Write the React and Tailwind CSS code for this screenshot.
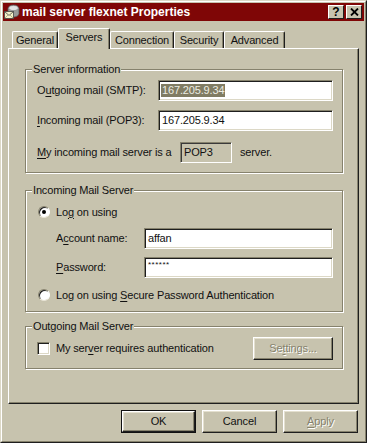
import React from 'react';

const raised =
  'border border-t-white border-l-white border-r-[#1e1e1e] border-b-[#1e1e1e] shadow-[inset_-1px_-1px_0_#86826d,inset_1px_1px_0_#e4e0cf]';
const sunken =
  'border border-t-[#86826d] border-l-[#86826d] border-r-white border-b-white shadow-[inset_1px_1px_0_#1e1e1e,inset_-1px_-1px_0_#dcd8c6]';
const etched = 'border border-[#86826d] shadow-[inset_1px_1px_0_#fff,1px_1px_0_#fff]';
const disabledText = 'text-[#86826d] [text-shadow:1px_1px_0_#fff]';

function U({ children }) {
  return <span className="underline decoration-1 underline-offset-[2px]">{children}</span>;
}

function MailIcon() {
  return (
    <svg width="16" height="16" viewBox="0 0 16 16">
      <ellipse cx="9.5" cy="4.5" rx="5.5" ry="3.5" fill="#b8b8b8" stroke="#555" strokeWidth="0.8" />
      <path d="M4 5v4.5c0 1.9 2.5 3.5 5.5 3.5s5.5-1.6 5.5-3.5V5" fill="#9a9a9a" stroke="#555" strokeWidth="0.8" />
      <ellipse cx="9.5" cy="4" rx="4" ry="2" fill="#e2e2e2" />
      <rect x="0.5" y="7.5" width="9" height="7" fill="#f4f0c8" stroke="#444" strokeWidth="0.8" />
      <path d="M0.8 7.8l4.2 3.6 4.2-3.6" fill="none" stroke="#444" strokeWidth="0.8" />
      <path d="M1 14l3-3M9 14l-3-3" fill="none" stroke="#8a8a60" strokeWidth="0.6" />
    </svg>
  );
}

function Radio({ checked }) {
  return (
    <span className="w-[12px] h-[12px] shrink-0 rounded-full bg-white border border-t-[#86826d] border-l-[#86826d] border-r-white border-b-[#e8e4d4] shadow-[inset_1px_1px_0_#1e1e1e] flex items-center justify-center">
      {checked && <span className="w-[4px] h-[4px] rounded-full bg-black" />}
    </span>
  );
}

function Tab({ label, width, selected }) {
  if (selected) {
    return (
      <div
        className={`relative z-10 -mb-px h-[21px] bg-[#c7c3ae] flex items-start justify-center pt-[2px] border-t border-l border-r border-t-white border-l-white border-r-[#1e1e1e] rounded-t-[2px] shadow-[inset_-1px_0_0_#86826d] ${width}`}
      >
        {label}
      </div>
    );
  }
  return (
    <div
      className={`h-[17px] flex items-center justify-center border-t border-l border-r border-t-white border-l-white border-r-[#1e1e1e] rounded-t-[2px] shadow-[inset_-1px_0_0_#86826d] ${width}`}
    >
      {label}
    </div>
  );
}

export default function App() {
  return (
    <div className="font-['Liberation_Sans',Arial,sans-serif] w-[367px] h-[443px] bg-[#c7c3ae] border border-t-[#dcd8c6] border-l-[#dcd8c6] border-r-[#1e1e1e] border-b-[#1e1e1e] text-[11px] tracking-[-0.15px] text-[#111] leading-[13px]">
      <div className="h-full border border-t-white border-l-white border-r-[#86826d] border-b-[#86826d] p-px flex flex-col">
        {/* title bar */}
        <div className="h-[18px] bg-[#7f0606] flex items-center pl-px pr-[2px]">
          <MailIcon />
          <span className="ml-[2px] text-white font-bold text-[12px] tracking-normal">mail server flexnet Properties</span>
          <div className="ml-auto flex gap-[2px]">
            <div className="w-[16px] h-[14px] bg-[#c7c3ae] border border-t-white border-l-white border-r-[#1e1e1e] border-b-[#1e1e1e] flex items-center justify-center">
              <span className="text-black font-bold text-[12px] leading-[12px] tracking-normal">?</span>
            </div>
            <div className="w-[16px] h-[14px] bg-[#c7c3ae] border border-t-white border-l-white border-r-[#1e1e1e] border-b-[#1e1e1e] flex items-center justify-center">
              <svg width="9" height="8" viewBox="0 0 9 8">
                <path d="M1 0.5l7 7M8 0.5l-7 7" stroke="#000" strokeWidth="1.8" />
              </svg>
            </div>
          </div>
        </div>

        {/* tabs */}
        <div className="mt-[7px] ml-[9px] h-[20px] flex items-end">
          <Tab label="General" width="w-[46px]" />
          <Tab label="Servers" width="w-[52px]" selected />
          <Tab label="Connection" width="w-[64px]" />
          <Tab label="Security" width="w-[50px]" />
          <Tab label="Advanced" width="w-[61px]" />
        </div>

        {/* panel */}
        <div className="ml-[5px] w-[351px] h-[356px] border border-t-white border-l-white border-r-[#1e1e1e] border-b-[#1e1e1e] shadow-[inset_-1px_-1px_0_#86826d] flex flex-col">
          <fieldset className={`${etched} ml-[16px] mt-[14px] w-[318px]`}>
            <legend className="ml-[6px] px-px bg-[#c7c3ae]">Server information</legend>
            <div className="pl-[11px] pr-[9px] pt-[4px] pb-[9px] flex flex-col">
              <div className="h-[21px] flex items-center">
                <span className="w-[121px]">O<U>u</U>tgoing mail (SMTP):</span>
                <div className={`${sunken} bg-white w-[175px] h-[21px] flex items-center pl-[2px]`}>
                  <span className="bg-[#807c63] text-[#ecece2] px-px">167.205.9.34</span>
                </div>
              </div>
              <div className="mt-[9px] h-[21px] flex items-center">
                <span className="w-[121px]"><U>I</U>ncoming mail (POP3):</span>
                <div className={`${sunken} bg-white w-[175px] h-[21px] flex items-center pl-[3px]`}>167.205.9.34</div>
              </div>
              <div className="mt-[11px] h-[21px] flex items-center">
                <span className="w-[143px]"><U>M</U>y incoming mail server is a</span>
                <div className="w-[52px] h-[21px] border border-t-[#86826d] border-l-[#86826d] border-r-white border-b-white shadow-[inset_1px_1px_0_#3a3a3a] flex items-center pl-[3px]">
                  POP3
                </div>
                <span className="ml-[8px]">server.</span>
              </div>
            </div>
          </fieldset>

          <fieldset className={`${etched} ml-[16px] mt-[11px] w-[318px]`}>
            <legend className="ml-[6px] px-px bg-[#c7c3ae]">Incoming Mail Server</legend>
            <div className="pl-[12px] pr-[9px] pt-[7px] pb-[8px] flex flex-col">
              <div className="h-[16px] flex items-center gap-[6px]">
                <Radio checked />
                <span>Lo<U>g</U> on using</span>
              </div>
              <div className="mt-[8px] h-[21px] flex items-center pl-[18px]">
                <span className="w-[88px]">A<U>c</U>count name:</span>
                <div className={`${sunken} bg-white w-[189px] h-[21px] flex items-center pl-[3px]`}>affan</div>
              </div>
              <div className="mt-[8px] h-[21px] flex items-center pl-[18px]">
                <span className="w-[88px]"><U>P</U>assword:</span>
                <div className={`${sunken} bg-white w-[189px] h-[21px] flex items-start pl-[3px] pt-[2px] text-[8px] leading-[10px] tracking-[0.5px]`}>
                  ******
                </div>
              </div>
              <div className="mt-[9px] h-[16px] flex items-center gap-[6px]">
                <Radio />
                <span>Log on using <U>S</U>ecure Password Authentication</span>
              </div>
            </div>
          </fieldset>

          <fieldset className={`${etched} ml-[16px] mt-[8px] w-[318px]`}>
            <legend className="ml-[6px] px-px bg-[#c7c3ae]">Outgoing Mail Server</legend>
            <div className="pl-[11px] pr-[9px] pt-[4px] pb-[8px] flex items-center justify-between">
              <div className="flex items-center gap-[6px]">
                <span className={`${sunken} bg-white w-[13px] h-[13px]`} />
                <span>My ser<U>v</U>er requires authentication</span>
              </div>
              <div className={`${raised} w-[80px] h-[23px] flex items-center justify-center ${disabledText}`}>
                Se<U>t</U>tings...
              </div>
            </div>
          </fieldset>
        </div>

        {/* dialog buttons */}
        <div className="mt-[6px] pr-[6px] flex justify-end gap-[6px]">
          <div className="w-[75px] h-[23px] border border-[#111]">
            <div className={`${raised} w-full h-full flex items-center justify-center`}>OK</div>
          </div>
          <div className={`${raised} w-[75px] h-[23px] flex items-center justify-center`}>Cancel</div>
          <div className={`${raised} w-[75px] h-[23px] flex items-center justify-center ${disabledText}`}>
            <U>A</U>pply
          </div>
        </div>
      </div>
    </div>
  );
}
